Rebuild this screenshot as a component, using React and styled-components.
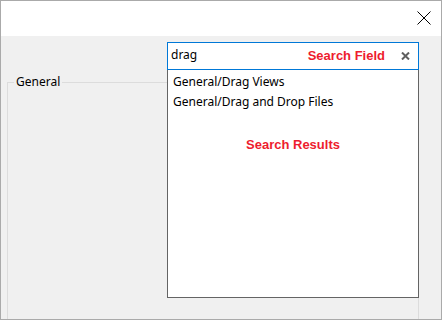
import React from 'react';
import styled, { createGlobalStyle } from 'styled-components';

const GlobalStyle = createGlobalStyle`
    html, body {
        margin: 0;
        padding: 0;
        background: #ffffff;
    }
    body {
        font-family: "Noto Sans", "Liberation Sans", sans-serif;
        font-size: 12px;
        color: #000000;
    }
`;

const Window = styled.div`
    width: 442px;
    height: 320px;
    box-sizing: border-box;
    border: 1px solid #aaaaaa;
    display: flex;
    flex-direction: column;
    background: #f0f0f0;
    overflow: hidden;
`;

const TitleBar = styled.div`
    height: 35px;
    flex: none;
    background: #ffffff;
    display: flex;
    justify-content: flex-end;
    align-items: flex-start;
    padding: 10px 10px 0 0;
    box-sizing: border-box;
`;

const Content = styled.div`
    flex: 1;
    min-height: 0;
    padding: 6px 22px 0 6px;
    display: flex;
    flex-direction: column;
    gap: 4px;
`;

const SearchRow = styled.div`
    display: flex;
    justify-content: flex-end;
`;

const SearchWrap = styled.div`
    position: relative;
    width: 252px;
`;

const SearchField = styled.div`
    height: 28px;
    box-sizing: border-box;
    border: 1px solid #0078d7;
    background: #ffffff;
    display: flex;
    align-items: center;
    padding: 0 8px 0 3px;
`;

const Query = styled.span`
    flex: 1;
    line-height: 16px;
    margin-top: -2px;
`;

const Callout = styled.span`
    font-family: "Liberation Sans", Arial, sans-serif;
    font-weight: bold;
    font-size: 13px;
    color: #ee1c2e;
`;

const FieldCallout = styled(Callout)`
    margin-top: -2px;
`;

const ClearButton = styled.span`
    display: flex;
    margin-left: 16px;
`;

const Results = styled.div`
    position: absolute;
    top: 100%;
    left: 0;
    right: 0;
    height: 228px;
    box-sizing: border-box;
    background: #ffffff;
    border: 1px solid #646464;
    border-top: none;
    padding-top: 3px;
    display: flex;
    flex-direction: column;
    z-index: 2;
`;

const ResultRow = styled.div`
    height: 20px;
    line-height: 18px;
    padding-left: 5px;
`;

const ResultsNote = styled(Callout)`
    align-self: center;
    margin-top: 24px;
    line-height: 16px;
`;

const Group = styled.fieldset`
    margin: 0;
    flex: none;
    height: 260px;
    border: 1px solid #dcdcdc;
    padding: 0 6px;
`;

const Legend = styled.legend`
    padding: 0 2px;
    line-height: 16px;
`;

const CloseIcon = () => (
    <svg width="14" height="14" viewBox="0 0 14 14">
        <path d="M0.5 0.5 L13.5 13.5 M13.5 0.5 L0.5 13.5" stroke="#000" strokeWidth="1" fill="none" />
    </svg>
);

const ClearIcon = () => (
    <svg width="9" height="8" viewBox="0 0 9 8">
        <path d="M1 0.5 L8 7.5 M8 0.5 L1 7.5" stroke="#5f5f5f" strokeWidth="2" fill="none" />
    </svg>
);

const results = ['General/Drag Views', 'General/Drag and Drop Files'];

const App = () => (
    <Window>
        <GlobalStyle />
        <TitleBar>
            <CloseIcon />
        </TitleBar>
        <Content>
            <SearchRow>
                <SearchWrap>
                    <SearchField>
                        <Query>drag</Query>
                        <FieldCallout>Search Field</FieldCallout>
                        <ClearButton><ClearIcon /></ClearButton>
                    </SearchField>
                    <Results>
                        {results.map(r => <ResultRow key={r}>{r}</ResultRow>)}
                        <ResultsNote>Search Results</ResultsNote>
                    </Results>
                </SearchWrap>
            </SearchRow>
            <Group>
                <Legend>General</Legend>
            </Group>
        </Content>
    </Window>
);

export default App;
